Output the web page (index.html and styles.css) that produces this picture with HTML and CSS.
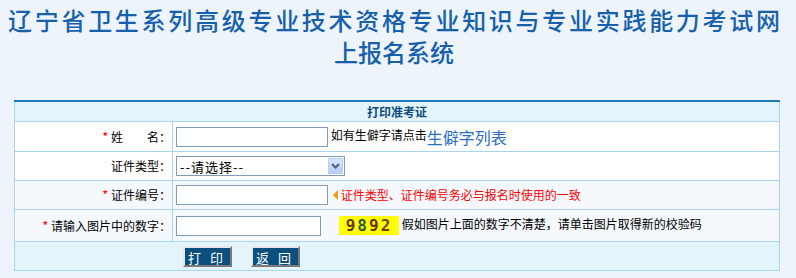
FILE: index.html
```html
<!DOCTYPE html>
<html>
	<head>
		<meta charset="utf-8" />
		<title>打印准考证</title>
		<link rel="stylesheet" href="styles.css">
	</head>
	<body>
		<div class="title">
			<div class="title_l1">辽宁省卫生系列高级专业技术资格专业知识与专业实践能力考试网</div>
			<div class="title_l2">上报名系统</div>
		</div>
		<table class="form">
			<tr class="head">
				<th colspan="2">打印准考证</th>
			</tr>
			<tr class="row_w r1">
				<td class="lab"><span class="star">*</span> 姓　　名：</td>
				<td class="val"><input type="text" class="txt" /> 如有生僻字请点击<a href="#" class="link">生僻字列表</a></td>
			</tr>
			<tr class="row_w r2">
				<td class="lab">证件类型：</td>
				<td class="val">
					<span class="sel">
						<select><option>--请选择--</option><option>身份证</option></select>
						<span class="sel_btn"><svg width="9" height="6" viewBox="0 0 9 6"><path d="M1 1 L4.5 4.5 L8 1" fill="none" stroke="#4d6185" stroke-width="2"/></svg></span>
					</span>
				</td>
			</tr>
			<tr class="row_b r3">
				<td class="lab"><span class="star">*</span> 证件编号：</td>
				<td class="val"><input type="text" class="txt" /> <span class="tri"></span><span class="warn">证件类型、证件编号务必与报名时使用的一致</span></td>
			</tr>
			<tr class="row_b r4">
				<td class="lab"><span class="star">*</span> 请输入图片中的数字：</td>
				<td class="val"><input type="text" class="txt short" /><span class="code"><i class="c1">9</i><i class="c2">8</i><i class="c1">9</i><i class="c3">2</i></span> 假如图片上面的数字不清楚，请单击图片取得新的校验码</td>
			</tr>
			<tr class="foot">
				<td class="lab"></td>
				<td class="val"><button class="btn">打 印</button><button class="btn">返 回</button></td>
			</tr>
		</table>
	</body>
</html>
```

FILE: styles.css
```css
	* {margin: 0; padding: 0;}
	body {background: #edf4fc; font: 12px "Noto Sans CJK SC", "Liberation Sans", sans-serif; color: #000;}
/*title*/
	.title {width: 772px; padding: 4px 0 0 8px; color: #1660ad; font-size: 24px; font-weight: 500; line-height: 32px;}
	.title_l1 {text-align: justify; text-align-last: justify;}
	.title_l2 {text-align: center;}
/*form*/
	.form {width: 766px; margin: 32px 0 0 14px; border-collapse: collapse; border: 1px solid #a8d4ee; border-top: 2px solid #1a7db5;}
	.form td {border: 1px solid #a8d4ee; vertical-align: middle; line-height: 16px;}
	.head th {height: 19px; background: #e3f4fd; color: #0d4d7c; font-weight: bold; font-size: 12px; border-bottom: 1px solid #a8d4ee;}
	.row_w td {background: #fff;}
	.row_b td {background: #f5f9fd;}
	.r1 td {height: 29px;}
	.r2 td {height: 28px;}
	.r3 td {height: 28px;}
	.r4 td {height: 31px;}
	.lab {width: 156px; text-align: right; padding-right: 1px;}
	.val {padding-left: 3px;}
	.star {color: #f00; font-size: 13px;}
	.txt {width: 150px; height: 18px; border: 1px solid #7f9db9; vertical-align: middle; background: #fff;}
	.txt.short {width: 143px;}
	.link {color: #2a6dc8; font-size: 16px; text-decoration: none; vertical-align: middle;}
/*select*/
	.sel {display: inline-flex; width: 167px; height: 18px; border: 1px solid #7f9db9; background: #fff; vertical-align: middle;}
	.sel select {flex: 1; border: 0; outline: 0; appearance: none; -webkit-appearance: none; background: #fff; font: 13px "Noto Sans CJK SC", sans-serif; letter-spacing: 1px; padding-left: 3px;}
	.sel_btn {width: 15px; height: 16px; margin: 1px; display: flex; align-items: center; justify-content: center; background: linear-gradient(#dbe6fd, #b7cbf8); border: 1px solid #b9cdf5; box-sizing: border-box;}
/*warn*/
	.tri {display: inline-block; width: 0; height: 0; border-style: solid; border-width: 5px 5px 5px 0; border-color: transparent #f39a00 transparent transparent; vertical-align: middle; margin: 0 3px 0 2px;}
	.warn {color: #f00; vertical-align: middle;}
/*code*/
	.code {display: inline-block; width: 60px; height: 19px; margin-left: 18px; background: #ffff00; font: bold 16px/19px "DejaVu Sans Mono", monospace; letter-spacing: 2px; text-align: center; vertical-align: middle;}
	.code i {font-style: normal;}
	.c1 {color: #6a3400;}
	.c2 {color: #2c5a3a;}
	.c3 {color: #7a3a00;}
/*foot*/
	.foot td {height: 28px; background: #e3f4fd; border-left: none; border-right: none;}
	.foot .lab {border-left: 1px solid #a8d4ee;}
	.foot .val {padding-left: 10px; border-right: 1px solid #a8d4ee;}
	.btn {width: 49px; height: 21px; margin-right: 19px; background: #0b4f7e; color: #fff; font: 13px "Noto Sans CJK SC", sans-serif; letter-spacing: 3px; border: 2px solid; border-color: #e8e8e8 #7a7a7a #7a7a7a #e8e8e8; vertical-align: middle;}
```
